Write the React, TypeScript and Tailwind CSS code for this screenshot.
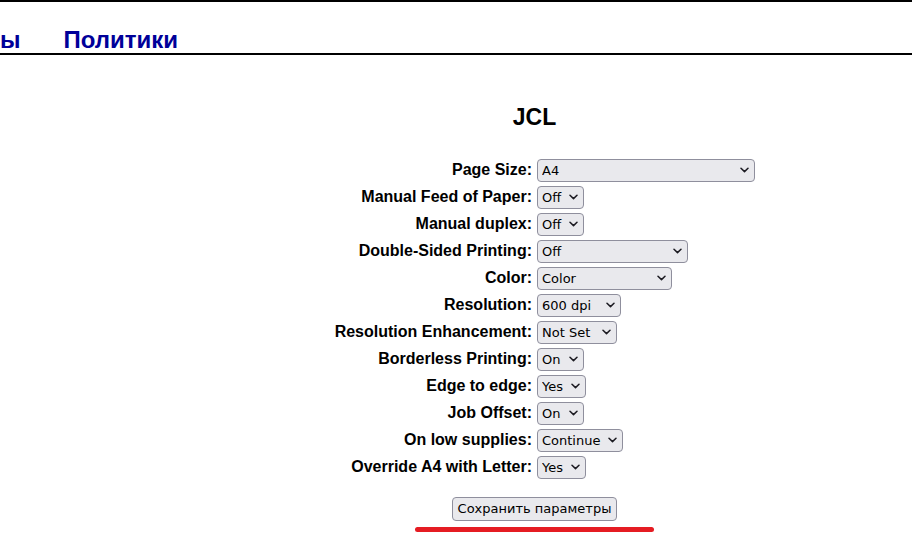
import { useState } from 'react';

type Option = { label: string; options: string[]; width: number };

// printer JCL options, widths taken from the browser's rendering
const ROWS: Option[] = [
    { label: 'Page Size', options: ['A4', 'Letter', 'Legal', 'A5', 'B5 (JIS)', 'Executive', 'Envelope DL'], width: 218 },
    { label: 'Manual Feed of Paper', options: ['Off', 'On'], width: 47 },
    { label: 'Manual duplex', options: ['Off', 'On'], width: 47 },
    { label: 'Double-Sided Printing', options: ['Off', 'Long Edge (Standard)', 'Short Edge (Flip)'], width: 151 },
    { label: 'Color', options: ['Color', 'Grayscale'], width: 135 },
    { label: 'Resolution', options: ['600 dpi', '300 dpi', '1200 dpi'], width: 84 },
    { label: 'Resolution Enhancement', options: ['Not Set', 'On', 'Off'], width: 80 },
    { label: 'Borderless Printing', options: ['On', 'Off'], width: 47 },
    { label: 'Edge to edge', options: ['Yes', 'No'], width: 49 },
    { label: 'Job Offset', options: ['On', 'Off'], width: 47 },
    { label: 'On low supplies', options: ['Continue', 'Stop'], width: 86 },
    { label: 'Override A4 with Letter', options: ['Yes', 'No'], width: 49 },
];

function Chevron() {
    return (
        <svg
            className="pointer-events-none absolute right-[6px] top-1/2 -translate-y-1/2"
            width="9"
            height="6"
            viewBox="0 0 9 6"
            fill="none"
        >
            <path d="M1 1.2 4.5 4.6 8 1.2" stroke="#1c1b22" strokeWidth="1.5" strokeLinecap="round" strokeLinejoin="round" />
        </svg>
    );
}

function Select({ row }: { row: Option }) {
    const [value, setValue] = useState(row.options[0]);
    return (
        <div className="relative h-[23px]" style={{ width: row.width }}>
            <select
                value={value}
                onChange={(e) => setValue(e.target.value)}
                className="h-full w-full appearance-none rounded-[4px] border border-[#8f8f9d] bg-[#e9e9ed] pl-[4px] pr-[18px] font-['DejaVu_Sans',sans-serif] text-[13px] leading-[21px] text-black outline-none"
            >
                {row.options.map((o) => (
                    <option key={o}>{o}</option>
                ))}
            </select>
            <Chevron />
        </div>
    );
}

export default function App() {
    return (
        <div className="min-h-screen bg-white font-['Liberation_Sans',Arial,sans-serif] text-black">
            <div className="border-y-2 border-black">
                <nav className="flex gap-[43px] pt-[24px] text-[24px] leading-[27px] font-bold text-[#000099]">
                    <span>ы</span>
                    <span>Политики</span>
                </nav>
            </div>

            {/* Content */}
            <div className="flex flex-col items-center pl-[157px]">
                <h2 className="mt-[48px] text-[23px] leading-[28px] font-bold">JCL</h2>

                <form className="mt-[25px] flex flex-col items-center">
                    <div className="ml-[18px] grid grid-cols-[200px_218px] gap-x-[5px]">
                        {ROWS.map((row) => (
                            <div key={row.label} className="contents">
                                <div className="flex h-[27px] items-center justify-end text-[16px] leading-[18px] font-bold whitespace-nowrap">
                                    {row.label}:
                                </div>
                                <div className="flex h-[27px] items-center">
                                    <Select row={row} />
                                </div>
                            </div>
                        ))}
                    </div>

                    <button
                        type="button"
                        className="mt-[17px] h-[24px] rounded-[4px] border border-[#8f8f9d] bg-[#e9e9ed] px-[5px] font-['DejaVu_Sans',sans-serif] text-[13px] leading-[22px] text-black"
                    >
                        Сохранить параметры
                    </button>
                    <div className="mt-[6px] h-[5px] w-[239px] rounded-full bg-[#e51c23]" />
                </form>
            </div>
        </div>
    );
}
